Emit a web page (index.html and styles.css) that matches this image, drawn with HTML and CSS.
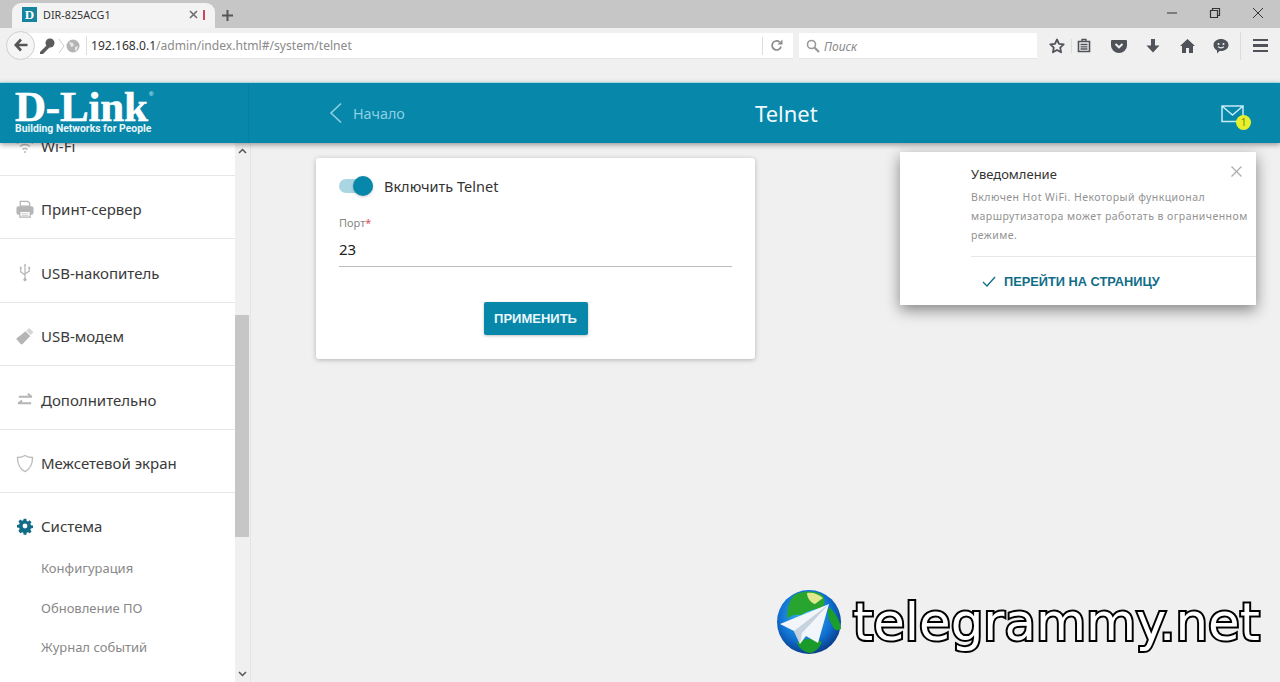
FILE: index.html
```html
<!DOCTYPE html>
<html lang="ru">
<head>
    <meta charset="UTF-8">
    <title>DIR-825ACG1</title>
    <link rel="stylesheet" href="styles.css">
</head>
<body>
    <!-- browser chrome -->
    <div class="tabbar">
        <div class="tab">
            <span class="favicon">D</span>
            <span class="tab-title">DIR-825ACG1</span>
            <svg class="tab-close" width="9" height="9" viewBox="0 0 9 9"><path d="M1 1l7 7M8 1l-7 7" stroke="#6d6d6d" stroke-width="1.6"/></svg>
            <span class="tab-mark"></span>
        </div>
        <svg class="tab-new" width="11" height="11" viewBox="0 0 11 11"><path d="M5.5 0v11M0 5.5h11" stroke="#555" stroke-width="2"/></svg>
        <div class="win-buttons">
            <svg width="12" height="12" viewBox="0 0 12 12"><path d="M1 6h10" stroke="#333" stroke-width="1"/></svg>
            <svg width="12" height="12" viewBox="0 0 12 12"><path d="M1.5 3.5h7v7h-7zM3.5 3.5v-2h7v7h-2" fill="none" stroke="#333" stroke-width="1.2"/></svg>
            <svg width="12" height="12" viewBox="0 0 12 12"><path d="M1 1l10 10M11 1l-10 10" stroke="#333" stroke-width="1"/></svg>
        </div>
    </div>
    <div class="toolbar">
        <div class="url-wrap">
            <div class="back-btn">
                <svg width="14" height="14" viewBox="0 0 14 14"><path d="M7 1.5L1.8 7 7 12.500M2.500 7H13.500" fill="none" stroke="#555" stroke-width="2.600"/></svg>
            </div>
            <svg class="key" width="18" height="18" viewBox="0 0 18 18"><circle cx="12" cy="6" r="4.500" fill="#5c5c5c"/><path d="M9 8L2 15v2h3l7-7z" fill="#5c5c5c"/></svg>
            <svg class="chev" width="7" height="16" viewBox="0 0 7 16"><path d="M1 1l5 7-5 7" fill="none" stroke="#ccc"/></svg>
            <svg class="globe" width="14" height="14" viewBox="0 0 14 14"><circle cx="7" cy="7" r="6.500" fill="#b4b4b4"/><path d="M3 3l4 1 1 3-3 1zM9 8l3-1-1 4-2 1z" fill="#e6e6e6"/></svg>
            <div class="url">
                <span class="url-host">192.168.0.1</span><span class="url-path">/admin/index.html#/system/telnet</span>
            </div>
            <span class="reload-sep"></span>
            <svg class="reload" width="13" height="13" viewBox="0 0 13 13"><path d="M11 7.500A4.500 4.500 0 1 1 9.500 3" fill="none" stroke="#8b8b8b" stroke-width="1.700"/><path d="M7.500 5.500h5v-5z" fill="#8b8b8b"/></svg>
        </div>
        <div class="search">
            <svg width="14" height="14" viewBox="0 0 14 14"><circle cx="5.500" cy="5.500" r="4" fill="none" stroke="#999" stroke-width="1.600"/><path d="M8.500 8.500l4.500 4.500" stroke="#999" stroke-width="2.200"/></svg>
            <span>Поиск</span>
        </div>
        <div class="tools">
            <svg class="tool-star" width="16" height="16" viewBox="0 0 16 16"><path d="M8 1.500l2 4.300 4.700.6-3.500 3.200.9 4.700L8 12l-4.100 2.300.9-4.700L1.300 6.400 6 5.800z" fill="none" stroke="#4f5359" stroke-width="1.800" stroke-linejoin="round"/></svg>
            <span class="tool-sep"></span>
            <svg class="tool-list" width="14" height="15" viewBox="0 0 14 15"><path d="M1.500 3.500h11v10h-11z" fill="none" stroke="#4f5359" stroke-width="1.600"/><path d="M5 3.500V1.500h4v2M3.500 6.500h7M3.500 8.800h7M3.500 11h7" fill="none" stroke="#4f5359" stroke-width="1.300"/></svg>
            <svg class="tool-pocket" width="16" height="14" viewBox="0 0 16 14"><path d="M1 1h14a1 1 0 0 1 1 1v4.500a8 7.500 0 0 1-16 0V2a1 1 0 0 1 1-1z" fill="#4f5359"/><path d="M4.500 5L8 8.300 11.500 5" fill="none" stroke="#f0f0f0" stroke-width="2"/></svg>
            <svg class="tool-down" width="14" height="14" viewBox="0 0 14 14"><path d="M5 0h4v6.500h4.500L7 13.500.5 6.500H5z" fill="#4f5359"/></svg>
            <svg class="tool-home" width="15" height="14" viewBox="0 0 15 14"><path d="M7.500 0L15 7h-2v7H9V9H6v5H2V7H0z" fill="#4f5359"/></svg>
            <svg class="tool-chat" width="16" height="16" viewBox="0 0 16 16"><path d="M8 1c4 0 7.500 2.500 7.500 6S12 13 8 13H6.500L4 15.500V12.500C2 11.500.5 9.500.5 7 .5 3.500 4 1 8 1z" fill="#4f5359"/><circle cx="5.500" cy="6" r="1" fill="#f0f0f0"/><circle cx="10.500" cy="6" r="1" fill="#f0f0f0"/><path d="M5 8.700c1.500 1.500 4.500 1.500 6 0" fill="none" stroke="#f0f0f0" stroke-width="1.200"/></svg>
            <span class="tool-sep tool-sep-last"></span>
            <span class="burger"><i></i><i></i><i></i></span>
        </div>
    </div>

    <!-- router page -->
    <div class="page">
        <header class="top">
            <div class="brand">
                <div class="logo">D-Link<sup>®</sup></div>
                <div class="slogan">Building Networks for People</div>
            </div>
            <div class="top-main">
                <a class="home-link">
                    <svg width="14" height="22" viewBox="0 0 14 22"><path d="M12 1.500L2 11l10 9.500" fill="none" stroke="#8fd0e2" stroke-width="1.600"/></svg>
                    <span>Начало</span>
                </a>
                <h1 class="page-title">Telnet</h1>
                <div class="mail">
                    <svg width="23" height="18" viewBox="0 0 23 18"><path d="M1 1h21v15.500H1zM1 1l10.500 9L22 1" fill="none" stroke="#c6ecf6" stroke-width="1.500"/></svg>
                    <span class="mail-badge">1</span>
                </div>
            </div>
        </header>

        <div class="layout">
            <aside class="sidebar">
                <nav class="menu">
                    <div class="menu-item">
                        <svg class="menu-icon" width="18" height="14" viewBox="0 0 18 14"><path d="M1 4.500a12 12 0 0 1 16 0M4 7.500a7.500 7.500 0 0 1 10 0M6.500 10.500a3.500 3.500 0 0 1 5 0" fill="none" stroke="#bbb" stroke-width="1.500"/><circle cx="9" cy="13" r="1" fill="#bbb"/></svg>
                        <span>Wi-Fi</span>
                    </div>
                    <div class="menu-item">
                        <svg class="menu-icon" width="19" height="19" viewBox="0 0 19 19"><path d="M4.500 6V1h8l2 2v3z" fill="none" stroke="#b5b5b5" stroke-width="1.300"/><rect x="0.500" y="6" width="18" height="9" rx="2" fill="#b5b5b5"/><path d="M4 11.500h11v6H4z" fill="#fff" stroke="#b5b5b5" stroke-width="1.300"/><path d="M6 14h7M6 16h7" stroke="#c8c8c8"/></svg>
                        <span>Принт-сервер</span>
                    </div>
                    <div class="menu-item">
                        <svg class="menu-icon" width="19" height="19" viewBox="0 0 19 19"><path d="M9.500 2v15M5 5v4l4.500 3M14 5v3l-4.500 3" fill="none" stroke="#b5b5b5" stroke-width="1.300"/><path d="M9.500 0l-1.500 2.500h3zM4 3.500h2v2H4zM13 3.500h2v2h-2z" fill="#b5b5b5"/><circle cx="9.500" cy="17" r="1.700" fill="#b5b5b5"/></svg>
                        <span>USB-накопитель</span>
                    </div>
                    <div class="menu-item">
                        <svg class="menu-icon" width="19" height="19" viewBox="0 0 19 19"><path d="M.5 11.500L10 4l5 5-8 8.500q-1 1-2 0L1 13q-1-.800-.500-1.500z" fill="#b5b5b5"/><path d="M11 3.500l3-3L18.500 5l-3 3z" fill="#d5d5d5"/></svg>
                        <span>USB-модем</span>
                    </div>
                    <div class="menu-item">
                        <svg class="menu-icon" width="19" height="16" viewBox="0 0 19 16"><path d="M3 4.500h14M12.500 1.500l4 3M16 11.500H2M6.500 8.500l-4 3" fill="none" stroke="#b5b5b5" stroke-width="2"/></svg>
                        <span>Дополнительно</span>
                    </div>
                    <div class="menu-item">
                        <svg class="menu-icon" width="19" height="19" viewBox="0 0 19 19"><path d="M9.500 1c2.500 1.500 5 2.200 8 2.200 0 6.500-2 11.800-8 14.800-6-3-8-8.300-8-14.800 3 0 5.500-.7 8-2.200z" fill="none" stroke="#bcbcbc" stroke-width="1.400"/></svg>
                        <span>Межсетевой экран</span>
                    </div>
                    <div class="menu-item menu-open">
                        <div class="menu-head">
                            <svg class="menu-icon" width="18" height="18" viewBox="0 0 18 18"><path fill-rule="evenodd" d="M7.300 0h3.400l.4 2.600 1.600.7 2.200-1.500 2.300 2.400-1.500 2.100.7 1.700 2.600.4v3.200l-2.600.4-.7 1.700 1.500 2.100-2.300 2.400-2.200-1.500-1.600.7-.4 2.600H7.300l-.4-2.600-1.600-.7-2.200 1.500L.8 15l1.500-2.100-.7-1.700L-1 10.800V7.600l2.600-.4.7-1.700L.8 3.400l2.300-2.400 2.200 1.500 1.600-.7zM9 6a3 3 0 1 0 0 6 3 3 0 0 0 0-6z" fill="#116d87" transform="translate(1.800 1.800) scale(.8)"/></svg>
                            <span>Система</span>
                        </div>
                        <a class="submenu-item">Конфигурация</a>
                        <a class="submenu-item">Обновление ПО</a>
                        <a class="submenu-item">Журнал событий</a>
                    </div>
                </nav>
            </aside>
            <div class="scrollbar">
                <svg width="9" height="6" viewBox="0 0 9 6"><path d="M1 5l3.500-3.500L8 5" fill="none" stroke="#555" stroke-width="1.500"/></svg>
                <div class="scroll-track"><div class="scroll-thumb"></div></div>
                <svg width="9" height="6" viewBox="0 0 9 6"><path d="M1 1l3.500 3.500L8 1" fill="none" stroke="#555" stroke-width="1.500"/></svg>
            </div>

            <main class="content">
                <section class="card">
                    <div class="switch-row">
                        <span class="switch"><span class="switch-knob"></span></span>
                        <span>Включить Telnet</span>
                    </div>
                    <label class="field-label">Порт<em>*</em></label>
                    <div class="field-value">23</div>
                    <div class="card-actions">
                        <button class="apply-btn">ПРИМЕНИТЬ</button>
                    </div>
                </section>
            </main>
        </div>

        <!-- notification popup -->
        <div class="notice">
            <svg class="notice-close" width="11" height="11" viewBox="0 0 11 11"><path d="M.5.5l10 10M10.500.5l-10 10" stroke="#aaa" stroke-width="1.200"/></svg>
            <div class="notice-title">Уведомление</div>
            <p class="notice-text">Включен Hot WiFi. Некоторый функционал маршрутизатора может работать в ограниченном режиме.</p>
            <div class="notice-action">
                <svg width="14" height="11" viewBox="0 0 14 11"><path d="M1 6l4 4 8-9" fill="none" stroke="#116d87" stroke-width="1.300"/></svg>
                <span>ПЕРЕЙТИ НА СТРАНИЦУ</span>
            </div>
        </div>

        <!-- watermark -->
        <div class="watermark">
            <svg width="64" height="64" viewBox="0 0 64 64">
                <defs>
                    <radialGradient id="sea" cx="45%" cy="40%" r="60%">
                        <stop offset="0%" stop-color="#3fc0ee"/>
                        <stop offset="70%" stop-color="#0f6fd0"/>
                        <stop offset="100%" stop-color="#0a3f8c"/>
                    </radialGradient>
                </defs>
                <circle cx="32" cy="32" r="32" fill="url(#sea)"/>
                <path d="M17 5c8-4 20-5 28 0 4 5 3 10-1 13-8 1-13 3-20 7-4-1-10 0-14 3 0-8 2-17 7-23z" fill="#27a52f"/>
                <path d="M30 3c6-1 11 1 16 5l-8 6c-4-1-8-6-8-11z" fill="#dfe88c"/>
                <path d="M52 17c6 5 11 13 12 22-3 2-6 2-8-2-3-6-7-12-4-20z" fill="#1c9e2e"/>
                <path d="M20 52c8-4 18-4 25 0-2 5-6 10-12 11-7-1-12-6-13-11z" fill="#1b9a2c"/>
                <path d="M52 14L3 34l14 7 6 13 6-8 12 7z" fill="#f2f6fa"/>
                <path d="M52 14L17 41l6 13 2-11z" fill="#c6d2de"/>
            </svg>
            <span class="watermark-text">telegrammy.net</span>
        </div>
    </div>
</body>
</html>
```

FILE: styles.css
```css
* {
    box-sizing: border-box;
}
body {
    margin: 0;
    height: 682px;
    overflow: hidden;
    display: flex;
    flex-direction: column;
    background: #f0f0f0;
    font-family: "Noto Sans", sans-serif;
    color: #333;
}

/* browser chrome */
.tabbar {
    height: 28px;
    flex: none;
    display: flex;
    align-items: flex-end;
    background: #c6c6c6;
    padding-left: 12px;
}
.tab {
    width: 203px;
    height: 25px;
    display: flex;
    align-items: center;
    padding: 0 10px 2px 10px;
    background: #f3f3f3;
    border-radius: 9px 9px 0 0;
}
.favicon {
    width: 15px;
    height: 15px;
    background: #17849f;
    color: #fff;
    font: bold 13px/15px "Liberation Serif", serif;
    text-align: center;
}
.tab-title {
    margin-left: 6px;
    font-size: 10.800px;
    color: #333;
    flex: 1;
}
.tab-close {
    margin-right: 5px;
}
.tab-mark {
    width: 2px;
    height: 10px;
    background: #d0445e;
}
.tab-new {
    margin: 0 0 7px 7px;
}
.win-buttons {
    margin-left: auto;
    height: 100%;
    display: flex;
    align-items: center;
    gap: 31px;
    padding: 0 16px 2px 0;
}
.toolbar {
    height: 54px;
    flex: none;
    display: flex;
    align-items: flex-start;
    padding: 5px 0 0 6px;
    background: #f0f0f0;
}
.url-wrap {
    width: 787px;
    height: 25px;
    display: flex;
    align-items: center;
    background: #fff;
    border-radius: 13px 0 0 13px;
    box-shadow: 0 1px 0 #e4e4e4;
    position: relative;
}
.back-btn {
    width: 29px;
    height: 29px;
    margin-top: -1px;
    flex: none;
    display: flex;
    align-items: center;
    justify-content: center;
    background: #f5f5f5;
    border: 1px solid #cfcfcf;
    border-radius: 50%;
}
.key {
    margin-left: 3px;
}
.chev {
    margin-left: 2px;
}
.globe {
    margin-left: 1px;
}
.url {
    margin-left: 6px;
    padding: 1px 0 0 4px;
    border-left: 1px solid #ddd;
    flex: 1;
    font-size: 12.100px;
    line-height: 18px;
}
.url-host {
    color: #333;
}
.url-path {
    color: #8a8a8a;
}
.reload-sep {
    width: 1px;
    height: 18px;
    background: #ddd;
}
.reload {
    margin: 0 10px 0 7px;
}
.search {
    width: 238px;
    height: 25px;
    margin-left: 6px;
    display: flex;
    align-items: center;
    gap: 4px;
    padding: 1px 0 0 7px;
    background: #fff;
    box-shadow: 0 1px 0 #e4e4e4;
    font-size: 12px;
    font-style: italic;
    color: #8a8a8a;
}
.tools {
    flex: 1;
    height: 25px;
    display: flex;
    align-items: center;
}
.tools svg {
    flex: none;
}
.tool-star {
    margin-left: 12px;
}
.tool-sep {
    width: 1px;
    height: 14px;
    margin-left: 6px;
    background: #dcdcdc;
}
.tool-list {
    margin-left: 5px;
}
.tool-pocket {
    margin-left: 20px;
}
.tool-down {
    margin-left: 19px;
}
.tool-home {
    margin-left: 20px;
}
.tool-chat {
    margin-left: 18px;
}
.tool-sep-last {
    height: 28px;
    margin-left: 11px;
}
.burger {
    margin-left: 12px;
    width: 15px;
    display: flex;
    flex-direction: column;
    gap: 3px;
}
.burger i {
    height: 2.500px;
    background: #4f5359;
}

/* router page */
.page {
    flex: 1;
    min-height: 0;
    display: flex;
    flex-direction: column;
    position: relative;
}
.top {
    height: 61px;
    flex: none;
    display: flex;
    position: relative;
    z-index: 2;
    background: #0787aa;
    border-top: 1px solid #a5d7e4;
    box-shadow: 0 2px 5px rgba(0, 0, 0, 0.35);
}
.brand {
    width: 249px;
    flex: none;
    padding: 9px 0 0 15px;
    border-right: 1px solid #0580a2;
    color: #fff;
}
.logo {
    height: 29px;
    font: bold 43px/29px "Liberation Serif", serif;
    letter-spacing: -0.200px;
    -webkit-text-stroke: 0.600px #fff;
    position: relative;
}
.logo sup {
    position: absolute;
    top: -3px;
    left: 134px;
    font: 6px/10px "Liberation Sans", sans-serif;
    letter-spacing: 0;
    -webkit-text-stroke: 0;
}
.slogan {
    margin-top: 1px;
    font: bold 10.400px/13px Roboto, sans-serif;
    color: #e8f5f9;
}
.top-main {
    flex: 1;
    display: flex;
    align-items: center;
    padding-left: 80px;
}
.home-link {
    width: 426px;
    display: flex;
    align-items: center;
    gap: 10px;
    font-size: 14.300px;
    color: #8fd0e2;
}
.page-title {
    margin: 0;
    font-size: 22px;
    font-weight: 400;
    color: #eefafd;
}
.mail {
    margin: 1px 36px 0 auto;
    position: relative;
    display: flex;
}
.mail-badge {
    position: absolute;
    right: -7px;
    bottom: -7px;
    width: 15px;
    height: 15px;
    border-radius: 50%;
    background: #e8f02c;
    color: #6b8a20;
    font-size: 10px;
    line-height: 15px;
    text-align: center;
}
.layout {
    flex: 1;
    min-height: 0;
    display: flex;
}
.sidebar {
    width: 235px;
    flex: none;
    overflow: hidden;
    background: #fff;
}
.menu {
    margin-top: -31px;
}
.menu-item,
.menu-head {
    display: flex;
    align-items: center;
    gap: 7px;
    font-size: 15px;
    color: #3a3a3a;
}
.menu-item {
    height: 63.500px;
    padding: 5px 0 0 16px;
    border-bottom: 1px solid #e6e6e6;
}
.menu-icon {
    width: 18px;
    flex: none;
}
.menu-open {
    display: block;
    height: auto;
    border-bottom: 0;
    padding-top: 21px;
}
.menu-head {
    height: 24px;
    margin-bottom: 11px;
}
.submenu-item {
    display: block;
    height: 39.500px;
    padding-left: 25px;
    font-size: 13px;
    line-height: 39px;
    color: #888;
}
.scrollbar {
    width: 14px;
    margin-right: 1px;
    flex: none;
    display: flex;
    flex-direction: column;
    align-items: center;
    padding: 5px 0;
    background: #f0f0f0;
}
.scroll-track {
    flex: 1;
    width: 100%;
    padding-top: 161px;
}
.scroll-thumb {
    height: 222px;
    background: #c6c6c6;
}
.content {
    flex: 1;
    padding: 15px 0 0 65px;
    border-left: 1px solid #e4e4e4;
}
.card {
    width: 439px;
    height: 201px;
    padding: 18px 23px 0;
    background: #fff;
    border-radius: 3px;
    box-shadow: 0 1px 5px rgba(0, 0, 0, 0.25);
}
.switch-row {
    display: flex;
    align-items: center;
    gap: 11px;
    height: 20px;
    font-size: 14.500px;
    color: #333;
}
.switch {
    width: 34px;
    height: 14px;
    border-radius: 7px;
    background: #a9d6e2;
    display: flex;
    justify-content: flex-end;
    align-items: center;
}
.switch-knob {
    width: 20px;
    height: 20px;
    border-radius: 50%;
    background: #0787aa;
    box-shadow: 0 1px 3px rgba(0, 0, 0, 0.2);
}
.field-label {
    display: block;
    margin-top: 20px;
    font-size: 11px;
    line-height: 14px;
    color: #888;
}
.field-label em {
    color: #d9534f;
    font-style: normal;
}
.field-value {
    height: 37px;
    padding-top: 8px;
    border-bottom: 1px solid #bdbdbd;
    font-size: 15px;
    line-height: 22px;
    color: #222;
}
.card-actions {
    margin-top: 35px;
    display: flex;
    justify-content: center;
}
.apply-btn {
    width: 104px;
    height: 33px;
    border: 0;
    border-radius: 2px;
    background: #0787aa;
    box-shadow: 0 1px 3px rgba(0, 0, 0, 0.25);
    color: #e9f6fa;
    font: bold 13px "Liberation Sans", sans-serif;
}

/* over the page */
.notice {
    position: absolute;
    left: 900px;
    top: 70px;
    width: 356px;
    height: 153px;
    z-index: 3;
    padding: 13px 0 0 71px;
    background: #fff;
    box-shadow: 0 5px 14px rgba(0, 0, 0, 0.45);
}
.notice-close {
    position: absolute;
    top: 14px;
    right: 14px;
}
.notice-title {
    font-size: 13px;
    line-height: 18px;
    color: #333;
}
.notice-text {
    margin: 5px 0 0;
    font-size: 10.500px;
    line-height: 19px;
    letter-spacing: 0.450px;
    color: #929292;
}
.notice-action {
    margin-top: 11px;
    height: 49px;
    padding: 1px 0 0 11px;
    display: flex;
    align-items: center;
    gap: 8px;
    border-top: 1px solid #e6e6e6;
    font: bold 12.800px "Liberation Sans", sans-serif;
    color: #116d87;
}
.watermark {
    position: absolute;
    left: 777px;
    top: 508px;
    z-index: 3;
    display: flex;
    align-items: center;
    gap: 12px;
}
.watermark-text {
    font: 51.400px/60px "DejaVu Sans", sans-serif;
    color: #fff;
    -webkit-text-stroke: 4px #000;
    paint-order: stroke fill;
}
```
